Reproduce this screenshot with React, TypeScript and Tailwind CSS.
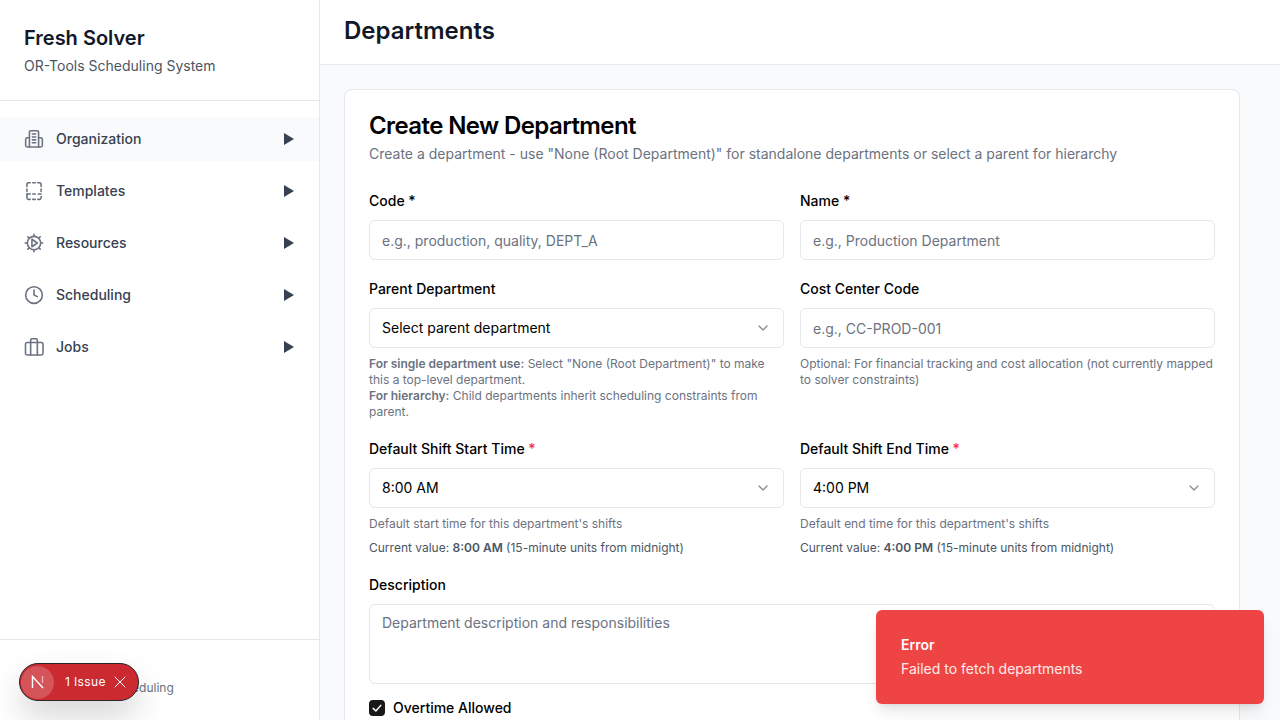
import { ChevronDown, Clock, X } from "lucide-react";
import type { ReactNode } from "react";

const BuildingIcon = () => (
  <svg viewBox="0 0 24 24" fill="none" stroke="currentColor" strokeWidth={1.9} strokeLinecap="round" strokeLinejoin="round" className="h-5 w-5">
    <path d="M6.5 21.5V3.5a1.5 1.5 0 0 1 1.5-1.5h8a1.5 1.5 0 0 1 1.5 1.5v18" />
    <path d="M6.5 10.5H4A2 2 0 0 0 2 12.5v7a2 2 0 0 0 2 2h16a2 2 0 0 0 2-2v-7a2 2 0 0 0-2-2h-2.5" />
    <path d="M10 6h4M10 9.5h4M10 13h4M10 16.5h4" />
  </svg>
);

const DashedSquareIcon = () => (
  <svg viewBox="0 0 24 24" fill="none" stroke="currentColor" strokeWidth={1.9} strokeLinecap="round" strokeLinejoin="round" className="h-5 w-5">
    <path d="M7.5 2H5.5a2 2 0 0 0-2 2v2.5M10.5 2h3M16.5 2h2a2 2 0 0 1 2 2v2.5M20.5 9.5v3M3.5 9.5v3" />
    <path d="M3.5 15.5V20a2 2 0 0 0 2 2h2M10.5 22h3M16.5 22h2a2 2 0 0 0 2-2v-1.5" />
    <path d="M3.5 15.5h4M10.5 15.5h3M17 15.5h3.5" />
  </svg>
);

const CogPlayIcon = () => (
  <svg viewBox="0 0 24 24" fill="none" stroke="currentColor" strokeWidth={1.9} strokeLinecap="round" strokeLinejoin="round" className="h-5 w-5">
    <circle cx="12" cy="12" r="8" />
    <path d="M12 1.5V4M12 20v2.5M1.5 12H4M20 12h2.5M4.6 4.6l1.7 1.7M17.7 17.7l1.7 1.7M4.6 19.4l1.7-1.7M17.7 6.3l1.7-1.7" />
    <path d="M9.5 7.5v9l6.5-4.5z" />
  </svg>
);

const SuitcaseIcon = () => (
  <svg viewBox="0 0 24 24" fill="none" stroke="currentColor" strokeWidth={1.9} strokeLinecap="round" strokeLinejoin="round" className="h-5 w-5">
    <rect x="1.8" y="6.5" width="21" height="15" rx="2" />
    <path d="M8 6.5V3.5A1.5 1.5 0 0 1 9.5 2h5A1.5 1.5 0 0 1 16 3.5v3M8 6.5v15M16 6.5v15" />
  </svg>
);

const navItems: { label: string; icon: ReactNode; active?: boolean }[] = [
  { label: "Organization", icon: <BuildingIcon />, active: true },
  { label: "Templates", icon: <DashedSquareIcon /> },
  { label: "Resources", icon: <CogPlayIcon /> },
  { label: "Scheduling", icon: <Clock className="h-5 w-5" strokeWidth={1.9} /> },
  { label: "Jobs", icon: <SuitcaseIcon /> },
];

const Label = ({ children }: { children: ReactNode }) => (
  <label className="block text-sm leading-[14px] font-medium text-black">{children}</label>
);

const Input = ({ placeholder }: { placeholder: string }) => (
  <div className="flex h-10 items-center rounded-md border border-[#e5e7eb] bg-white px-3 pt-px text-sm text-[#6b7280]">
    {placeholder}
  </div>
);

const Select = ({ value }: { value: string }) => (
  <div className="flex h-10 items-center justify-between rounded-md border border-[#e5e7eb] bg-white px-3 text-sm text-black">
    <span>{value}</span>
    <ChevronDown className="h-4 w-4 text-[#6b7280] opacity-80" />
  </div>
);

export default function App() {
  return (
    <div className="relative flex h-screen overflow-hidden bg-[#f9fafb] font-['Inter',sans-serif]">
      <aside className="flex w-80 shrink-0 flex-col border-r border-[#e5e7eb] bg-white">
        <div className="h-[101px] border-b border-[#e5e7eb] px-6 pt-6">
          <h1 className="text-xl leading-7 font-semibold text-[#111827]">Fresh Solver</h1>
          <p className="mt-1 text-sm leading-5 text-[#4b5563]">OR-Tools Scheduling System</p>
        </div>
        <nav className="flex-1 pt-4">
          <ul className="flex flex-col gap-2">
            {navItems.map((item) => (
              <li
                key={item.label}
                className={`flex h-11 items-center px-6 text-sm font-medium text-[#374151] ${item.active ? "bg-[#f9fafb]" : ""}`}
              >
                <span className="mr-3 text-[#6b7280]">{item.icon}</span>
                <span className="flex-1">{item.label}</span>
                <svg viewBox="0 0 12 14" className="h-[14px] w-[12px] text-[#374151]" fill="currentColor">
                  <path d="M1 1v12L11 7z" />
                </svg>
              </li>
            ))}
          </ul>
        </nav>
        <div className="h-[81px] border-t border-[#e5e7eb] px-6 pt-10 text-xs leading-4 text-[#6b7280]">
          OR-Tools Jobs Scheduling
        </div>
      </aside>

      <div className="flex min-w-0 flex-1 flex-col">
        <header className="h-[65px] shrink-0 border-b border-[#e5e7eb] bg-white px-6 pt-4">
          <h2 className="text-2xl leading-[30px] font-semibold text-[#111827]">Departments</h2>
        </header>
        <main className="flex-1 overflow-hidden p-6">
          <section className="max-w-4xl rounded-lg border border-[#e5e7eb] bg-white p-6">
            <h3 className="text-2xl leading-6 font-semibold tracking-tight text-black">Create New Department</h3>
            <p className="mt-[6px] text-sm leading-5 text-[#6b7280]">
              Create a department - use "None (Root Department)" for standalone departments or select a parent for hierarchy
            </p>

            <div className="mt-[30px] grid grid-cols-2 gap-x-4">
              <div>
                <Label>Code *</Label>
                <div className="mt-3"><Input placeholder="e.g., production, quality, DEPT_A" /></div>
              </div>
              <div>
                <Label>Name *</Label>
                <div className="mt-3"><Input placeholder="e.g., Production Department" /></div>
              </div>
            </div>

            <div className="mt-[22px] grid grid-cols-2 gap-x-4">
              <div>
                <Label>Parent Department</Label>
                <div className="mt-3"><Select value="Select parent department" /></div>
                <p className="mt-2 text-xs leading-4 text-[#6b7280]">
                  <strong className="font-semibold">For single department use:</strong> Select "None (Root Department)" to make this a top-level department.
                  <br />
                  <strong className="font-semibold">For hierarchy:</strong> Child departments inherit scheduling constraints from parent.
                </p>
              </div>
              <div>
                <Label>Cost Center Code</Label>
                <div className="mt-3"><Input placeholder="e.g., CC-PROD-001" /></div>
                <p className="mt-2 text-xs leading-4 text-[#6b7280]">
                  Optional: For financial tracking and cost allocation (not currently mapped to solver constraints)
                </p>
              </div>
            </div>

            <div className="mt-[22px] grid grid-cols-2 gap-x-4">
              <div>
                <Label>Default Shift Start Time <span className="text-red-500">*</span></Label>
                <div className="mt-3"><Select value="8:00 AM" /></div>
                <p className="mt-2 text-xs leading-4 text-[#6b7280]">Default start time for this department's shifts</p>
                <p className="mt-2 text-xs leading-4 text-[#4b5563]">
                  Current value: <strong className="font-semibold">8:00 AM</strong> (15-minute units from midnight)
                </p>
              </div>
              <div>
                <Label>Default Shift End Time <span className="text-red-500">*</span></Label>
                <div className="mt-3"><Select value="4:00 PM" /></div>
                <p className="mt-2 text-xs leading-4 text-[#6b7280]">Default end time for this department's shifts</p>
                <p className="mt-2 text-xs leading-4 text-[#4b5563]">
                  Current value: <strong className="font-semibold">4:00 PM</strong> (15-minute units from midnight)
                </p>
              </div>
            </div>

            <div className="mt-[22px]">
              <Label>Description</Label>
              <div className="mt-3 h-20 rounded-md border border-[#e5e7eb] bg-white px-3 py-2 text-sm leading-5 text-[#6b7280]">
                Department description and responsibilities
              </div>
            </div>

            <div className="mt-[14px] flex items-center gap-2">
              <span className="flex h-4 w-4 items-center justify-center rounded-[4px] bg-[#18181b] text-white">
                <svg viewBox="0 0 16 16" className="h-3 w-3" fill="none" stroke="currentColor" strokeWidth={2} strokeLinecap="round" strokeLinejoin="round">
                  <path d="M3 8.5 6.5 12 13 4.5" />
                </svg>
              </span>
              <span className="text-sm font-medium text-black">Overtime Allowed</span>
            </div>
          </section>
        </main>
      </div>

      <div className="absolute right-4 bottom-4 h-[94px] w-[388px] rounded-md bg-[#ef4444] px-[25px] pt-[25px] shadow-lg">
        <div className="text-sm leading-5 font-semibold text-white">Error</div>
        <div className="mt-1 text-sm leading-5 text-white/90">Failed to fetch departments</div>
      </div>

      <div className="absolute top-[663px] left-[19px] flex h-[38px] w-[120px] items-center rounded-full border border-[#27272a] bg-[#ca2a30] pl-[1px] text-white shadow-[0_16px_32px_rgba(0,0,0,0.16)]">
        <span className="flex h-[33px] w-[33px] items-center justify-center rounded-full bg-white/20">
          <svg viewBox="0 0 14 14" className="h-[14px] w-[14px]" fill="none" stroke="currentColor" strokeWidth={1.4}>
            <path d="M1.5 13V1.5L12 13" />
            <path d="M11.5 1v7" opacity={0.55} />
          </svg>
        </span>
        <span className="ml-[11px] text-xs font-normal tracking-[0.03em]">1 Issue</span>
        <X className="ml-[4px] h-5 w-5" strokeWidth={1.2} />
      </div>
    </div>
  );
}
